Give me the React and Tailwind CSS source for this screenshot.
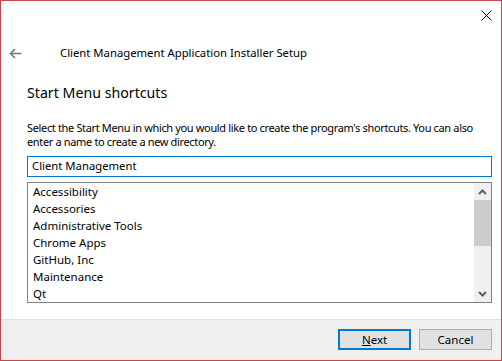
import React from "react";

const items = [
  "Accessibility",
  "Accessories",
  "Administrative Tools",
  "Chrome Apps",
  "GitHub, Inc",
  "Maintenance",
  "Qt",
];

export default function App() {
  return (
    <div
      className="w-[502px] h-[361px] border border-[#c8474f] bg-white flex flex-col text-black"
      style={{ fontFamily: '"Noto Sans", "Open Sans", sans-serif' }}
    >
      {/* title bar */}
      <div className="h-[30px] flex justify-end items-start pt-[9px] pr-[9px]">
        <svg width="11" height="11" viewBox="0 0 11 11">
          <path d="M0.5 0.5 L10.5 10.5 M10.5 0.5 L0.5 10.5" stroke="#000" strokeWidth="1" fill="none" />
        </svg>
      </div>
      {/* header */}
      <div className="mt-[10px] h-[24px] flex items-center">
        <div className="w-[59px] pl-[8px] flex items-center">
          <svg width="13" height="11" viewBox="0 0 13 11">
            <path d="M12.5 5.5 H1.5 M6 1 L1.5 5.5 L6 10" stroke="#7a7a7a" strokeWidth="1.7" fill="none" />
          </svg>
        </div>
        <div className="text-[11.3px] leading-[16px]">Client Management Application Installer Setup</div>
      </div>
      {/* content */}
      <div className="flex-1 pl-[26px] pr-[9px] flex flex-col">
        <div className="mt-[17px] text-[14.2px] leading-[22px]">Start Menu shortcuts</div>
        <div className="mt-[17px] text-[11px] leading-[14px] tracking-[-0.35px] whitespace-nowrap">
          <div>Select the Start Menu in which you would like to create the program's shortcuts. You can also</div>
          <div>enter a name to create a new directory.</div>
        </div>
        <div className="mt-[7px] h-[21px] border border-[#0078d7] flex items-center pl-[4px] text-[11.3px]">
          Client Management
        </div>
        <div className="mt-[5px] h-[121px] border border-[#828282] flex overflow-hidden">
          <div className="flex-1 pl-[5px] overflow-hidden">
            {items.map((t) => (
              <div key={t} className="h-[17px] leading-[17px] text-[11.5px] whitespace-nowrap">
                {t}
              </div>
            ))}
          </div>
          <div className="w-[17px] bg-[#f0f0f0] flex flex-col">
            <div className="h-[17px] flex items-center justify-center">
              <svg width="9" height="6" viewBox="0 0 9 6">
                <path d="M1 5 L4.5 1.5 L8 5" stroke="#606060" strokeWidth="2" fill="none" />
              </svg>
            </div>
            <div className="h-[46px] bg-[#cdcdcd]" />
            <div className="flex-1" />
            <div className="h-[17px] flex items-center justify-center">
              <svg width="9" height="6" viewBox="0 0 9 6">
                <path d="M1 1 L4.5 4.5 L8 1" stroke="#606060" strokeWidth="2" fill="none" />
              </svg>
            </div>
          </div>
        </div>
      </div>
      {/* footer */}
      <div className="h-[41px] border-t border-[#dfdfdf] bg-[#f0f0f0] flex justify-end items-start pt-[9px] pr-[9px] gap-[8px]">
        <div className="w-[73px] h-[21px] border-2 border-[#0078d7] bg-[#e1e1e1] flex items-center justify-center text-[11.5px]">
          <span>
            <span className="underline">N</span>ext
          </span>
        </div>
        <div className="w-[73px] h-[21px] border border-[#adadad] bg-[#e1e1e1] flex items-center justify-center text-[11.5px]">
          Cancel
        </div>
      </div>
    </div>
  );
}
